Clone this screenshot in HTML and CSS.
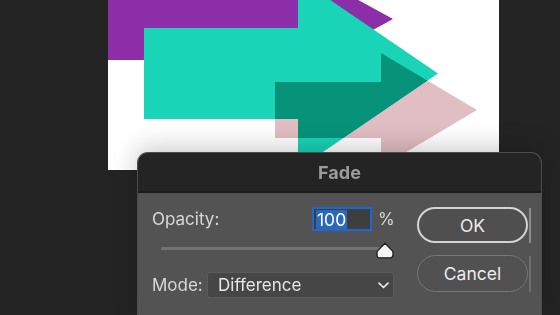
FILE: index.html
```html
<!DOCTYPE html>
<html>
<head>
<meta charset="utf-8">
<link rel="stylesheet" href="styles.css">
</head>
<body>
<div class="workspace">
  <div class="canvas">
    <svg class="art" viewBox="108 0 391 170" width="391" height="170">
      <rect x="108" y="0" width="391" height="170" fill="#ffffff"/>
      <polygon fill="#8b2ea8" points="100,-22 298,-22 298,-33 393,19 298,71 298,60 100,60"/>
      <polygon fill="#19d4b6" points="144,28 298,28 298,-22 438,73.5 298,169 298,119 144,119"/>
      <polygon class="diff" fill="#1f413c" points="275,82 381,82 381,53 477,110 381,167 381,138 275,138"/>
    </svg>
  </div>
</div>

<div class="dialog">
  <div class="titlebar">Fade</div>
  <div class="dialog-body">
    <div class="form">
      <div class="row">
        <span class="label">Opacity:</span>
        <div class="value-group">
          <div class="num-input"><span class="selected">100</span></div>
          <span class="unit">%</span>
        </div>
      </div>
      <div class="slider">
        <div class="track"></div>
        <svg class="thumb" width="18" height="17" viewBox="0 0 18 17">
          <path d="M9 1.2 L16.2 8.6 Q17 9.5 17 10.8 L17 13 Q17 15.8 14.2 15.8 L3.8 15.8 Q1 15.8 1 13 L1 10.8 Q1 9.5 1.8 8.6 Z" fill="#f4f4f4" stroke="#1e1e1e" stroke-width="1.3" stroke-linejoin="round"/>
        </svg>
      </div>
      <div class="row mode-row">
        <span class="label">Mode:</span>
        <div class="select">
          <span>Difference</span>
          <svg class="chev" width="11" height="7" viewBox="0 0 11 7">
            <path d="M1 1.2 L5.5 5.5 L10 1.2" fill="none" stroke="#e6e6e6" stroke-width="1.7" stroke-linecap="round" stroke-linejoin="round"/>
          </svg>
        </div>
      </div>
    </div>
    <div class="buttons">
      <div class="btn-wrap">
        <div class="btn btn-ok">OK</div>
        <span class="edge edge-ok"></span>
      </div>
      <div class="btn-wrap">
        <div class="btn btn-cancel">Cancel</div>
        <span class="edge edge-cancel"></span>
      </div>
    </div>
  </div>
</div>
</body>
</html>
```

FILE: styles.css
```css
* { box-sizing: border-box; }

html, body {
  margin: 0;
  padding: 0;
  width: 560px;
  height: 315px;
  overflow: hidden;
  background: #242424;
  font-family: "Inter", "Liberation Sans", sans-serif;
}

.workspace {
  padding-left: 108px;
}

.canvas {
  width: 391px;
  height: 170px;
  background: #ffffff;
  overflow: hidden;
}

.art { display: block; }

.diff { mix-blend-mode: difference; }

.dialog {
  position: absolute;
  left: 137px;
  top: 152px;
  width: 405px;
  height: 163px;
  border: 1px solid #4d4d4d;
  border-bottom: none;
  border-radius: 11px 11px 0 0;
  overflow: hidden;
  background: #535353;
  box-shadow: 0 -4px 26px rgba(0, 0, 0, 0.22);
}

.titlebar {
  height: 40px;
  background: #242424;
  border-bottom: 2px solid #1b1b1b;
  color: #9c9c9c;
  font-weight: 700;
  font-size: 18px;
  display: flex;
  align-items: center;
  justify-content: center;
  padding-top: 1px;
}

.dialog-body {
  display: flex;
  padding: 14px 11px 0 13px;
  gap: 23px;
}

.form {
  width: 244px;
  display: flex;
  flex-direction: column;
}

.row {
  display: flex;
  align-items: center;
  justify-content: space-between;
}

.label {
  color: #d8d8d8;
  font-size: 17px;
  padding-left: 1px;
}

.value-group {
  display: flex;
  align-items: center;
  gap: 6px;
}

.num-input {
  width: 60px;
  height: 24px;
  border: 2px solid #1c68d0;
  background: #3e3e3e;
  padding: 0 0 0 2px;
  display: flex;
  align-items: center;
}

.selected {
  background: #2a68b8;
  color: #ffffff;
  font-size: 17.5px;
  line-height: 19px;
  height: 19px;
  padding: 0 1px;
}

.unit {
  color: #d8d8d8;
  font-size: 17px;
  width: 15px;
  margin-right: 1px;
}

.slider {
  position: relative;
  margin-top: 12px;
  margin-left: 10px;
  width: 233px;
  height: 16px;
}

.track {
  margin-top: 4px;
  width: 222px;
  height: 3px;
  background: #727272;
  border-radius: 1px;
}

.thumb {
  position: absolute;
  right: 0;
  top: -1px;
}

.mode-row {
  margin-top: 13px;
}

.select {
  width: 187px;
  height: 26px;
  background: #464646;
  border: 1px solid #5b5b5b;
  border-radius: 3px;
  display: flex;
  align-items: center;
  justify-content: space-between;
  padding: 0 4px 0 10px;
  color: #e6e6e6;
  font-size: 17px;
}

.chev { margin-top: 1px; }

.buttons {
  display: flex;
  flex-direction: column;
  gap: 12px;
}

.btn-wrap {
  display: flex;
  align-items: center;
  gap: 1px;
}

.btn {
  width: 111px;
  border-radius: 19px;
  display: flex;
  align-items: center;
  justify-content: center;
  color: #ececec;
  font-size: 17.5px;
}

.btn-ok {
  height: 36px;
  border: 2px solid #d4d4d4;
  background: #4f4f4f;
}

.btn-cancel {
  height: 37px;
  border: 1.5px solid #777777;
  background: #515151;
}

.edge {
  width: 2px;
}

.edge-ok {
  height: 35px;
  background: #8a8a8a;
}

.edge-cancel {
  height: 36px;
  background: #6e6e6e;
}
```
